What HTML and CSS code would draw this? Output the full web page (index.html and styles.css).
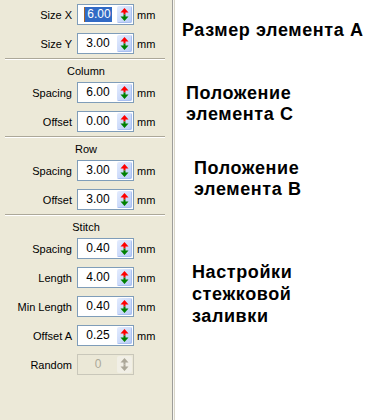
FILE: index.html
```html
<!DOCTYPE html>
<html lang="ru">

<head>
    <meta charset="utf-8">
    <meta name="viewport" content="width=device-width, initial-scale=1.0">
    <title>Fill settings</title>
    <link rel="stylesheet" href="styles.css">
</head>

<body>
    <div class="page">
        <div class="panel">
            <div class="group">
                <div class="row">
                    <label>Size X</label>
                    <div class="field"><span class="val"><span class="sel">6.00</span></span><span class="spin"><svg width="9" height="13" viewBox="0 0 9 13"><path d="M4.5 0 L8.5 4.5 H5.5 V6.5 H3.5 V4.5 H0.5 Z" fill="#f00"/><path d="M3.5 6.5 H5.5 V8.5 H8.5 L4.5 13 L0.5 8.5 H3.5 Z" fill="#008000"/></svg></span></div>
                    <span class="unit">mm</span>
                </div>
                <div class="row">
                    <label>Size Y</label>
                    <div class="field"><span class="val">3.00</span><span class="spin"><svg width="9" height="13" viewBox="0 0 9 13"><path d="M4.5 0 L8.5 4.5 H5.5 V6.5 H3.5 V4.5 H0.5 Z" fill="#f00"/><path d="M3.5 6.5 H5.5 V8.5 H8.5 L4.5 13 L0.5 8.5 H3.5 Z" fill="#008000"/></svg></span></div>
                    <span class="unit">mm</span>
                </div>
            </div>

            <div class="sep"></div>
            <div class="head">Column</div>
            <div class="group">
                <div class="row">
                    <label>Spacing</label>
                    <div class="field"><span class="val">6.00</span><span class="spin"><svg width="9" height="13" viewBox="0 0 9 13"><path d="M4.5 0 L8.5 4.5 H5.5 V6.5 H3.5 V4.5 H0.5 Z" fill="#f00"/><path d="M3.5 6.5 H5.5 V8.5 H8.5 L4.5 13 L0.5 8.5 H3.5 Z" fill="#008000"/></svg></span></div>
                    <span class="unit">mm</span>
                </div>
                <div class="row">
                    <label>Offset</label>
                    <div class="field"><span class="val">0.00</span><span class="spin"><svg width="9" height="13" viewBox="0 0 9 13"><path d="M4.5 0 L8.5 4.5 H5.5 V6.5 H3.5 V4.5 H0.5 Z" fill="#f00"/><path d="M3.5 6.5 H5.5 V8.5 H8.5 L4.5 13 L0.5 8.5 H3.5 Z" fill="#008000"/></svg></span></div>
                    <span class="unit">mm</span>
                </div>
            </div>

            <div class="sep"></div>
            <div class="head">Row</div>
            <div class="group">
                <div class="row">
                    <label>Spacing</label>
                    <div class="field"><span class="val">3.00</span><span class="spin"><svg width="9" height="13" viewBox="0 0 9 13"><path d="M4.5 0 L8.5 4.5 H5.5 V6.5 H3.5 V4.5 H0.5 Z" fill="#f00"/><path d="M3.5 6.5 H5.5 V8.5 H8.5 L4.5 13 L0.5 8.5 H3.5 Z" fill="#008000"/></svg></span></div>
                    <span class="unit">mm</span>
                </div>
                <div class="row">
                    <label>Offset</label>
                    <div class="field"><span class="val">3.00</span><span class="spin"><svg width="9" height="13" viewBox="0 0 9 13"><path d="M4.5 0 L8.5 4.5 H5.5 V6.5 H3.5 V4.5 H0.5 Z" fill="#f00"/><path d="M3.5 6.5 H5.5 V8.5 H8.5 L4.5 13 L0.5 8.5 H3.5 Z" fill="#008000"/></svg></span></div>
                    <span class="unit">mm</span>
                </div>
            </div>

            <div class="sep"></div>
            <div class="head">Stitch</div>
            <div class="group">
                <div class="row">
                    <label>Spacing</label>
                    <div class="field"><span class="val">0.40</span><span class="spin"><svg width="9" height="13" viewBox="0 0 9 13"><path d="M4.5 0 L8.5 4.5 H5.5 V6.5 H3.5 V4.5 H0.5 Z" fill="#f00"/><path d="M3.5 6.5 H5.5 V8.5 H8.5 L4.5 13 L0.5 8.5 H3.5 Z" fill="#008000"/></svg></span></div>
                    <span class="unit">mm</span>
                </div>
                <div class="row">
                    <label>Length</label>
                    <div class="field"><span class="val">4.00</span><span class="spin"><svg width="9" height="13" viewBox="0 0 9 13"><path d="M4.5 0 L8.5 4.5 H5.5 V6.5 H3.5 V4.5 H0.5 Z" fill="#f00"/><path d="M3.5 6.5 H5.5 V8.5 H8.5 L4.5 13 L0.5 8.5 H3.5 Z" fill="#008000"/></svg></span></div>
                    <span class="unit">mm</span>
                </div>
                <div class="row">
                    <label>Min Length</label>
                    <div class="field"><span class="val">0.40</span><span class="spin"><svg width="9" height="13" viewBox="0 0 9 13"><path d="M4.5 0 L8.5 4.5 H5.5 V6.5 H3.5 V4.5 H0.5 Z" fill="#f00"/><path d="M3.5 6.5 H5.5 V8.5 H8.5 L4.5 13 L0.5 8.5 H3.5 Z" fill="#008000"/></svg></span></div>
                    <span class="unit">mm</span>
                </div>
                <div class="row">
                    <label>Offset A</label>
                    <div class="field"><span class="val">0.25</span><span class="spin"><svg width="9" height="13" viewBox="0 0 9 13"><path d="M4.5 0 L8.5 4.5 H5.5 V6.5 H3.5 V4.5 H0.5 Z" fill="#f00"/><path d="M3.5 6.5 H5.5 V8.5 H8.5 L4.5 13 L0.5 8.5 H3.5 Z" fill="#008000"/></svg></span></div>
                    <span class="unit">mm</span>
                </div>
                <div class="row">
                    <label>Random</label>
                    <div class="field off"><span class="val">0</span><span class="spin"><svg width="9" height="13" viewBox="0 0 9 13"><path d="M4.5 0 L8.5 4.5 H5.5 V6.5 H3.5 V4.5 H0.5 Z" fill="#aca899"/><path d="M3.5 6.5 H5.5 V8.5 H8.5 L4.5 13 L0.5 8.5 H3.5 Z" fill="#aca899"/></svg></span></div>
                </div>
            </div>
        </div>

        <div class="notes">
            <p class="note n1">Размер элемента А</p>
            <p class="note n2">Положение<br>элемента С</p>
            <p class="note n3">Положение<br>элемента В</p>
            <p class="note n4">Настройки<br>стежковой<br>заливки</p>
        </div>
    </div>
</body>

</html>
```

FILE: styles.css
```css
body {
    margin: 0;
    padding: 0;
    background: white;
    font-family: "Liberation Sans", Arial, sans-serif;
}

.page {
    display: flex;
    height: 420px;
}

/* left dialog panel */

.panel {
    width: 172px;
    padding-top: 4px;
    background-color: #ece9d8;
    border-right: 1px solid #9d9d9a;
    font-size: 11px;
    color: #000000;
}

.group {
    display: flex;
    flex-direction: column;
    gap: 8px;
    margin-bottom: 4px;
}

.row {
    display: flex;
    align-items: center;
    height: 21px;
}

.row label {
    width: 72px;
    text-align: right;
}

.field {
    display: flex;
    box-sizing: border-box;
    width: 57px;
    height: 21px;
    margin-left: 5px;
    padding: 1px;
    border: 1px solid #7f9db9;
    background: white;
}

.val {
    flex: 1;
    text-align: center;
    line-height: 17px;
    font-size: 12px;
}

.sel {
    display: inline-block;
    padding: 0 1px 0 2px;
    border-left: 1px solid #a0642c;
    background: #316ac5;
    color: white;
    line-height: 15px;
    margin-top: 1px;
}

.spin {
    display: flex;
    align-items: center;
    justify-content: center;
    width: 15px;
    border-radius: 2px;
    background: linear-gradient(135deg, #e4ecfe, #b7cbf6);
    box-shadow: inset -1px -1px #a9bff0;
}

.unit {
    margin-left: 3px;
}

.field.off {
    border-color: #c9c7ba;
    background: #ebe8d7;
}

.field.off .val {
    color: #aca899;
}

.field.off .spin {
    background: #f1efe6;
    box-shadow: none;
}

.sep {
    margin: 0 7px 0 5px;
    border-top: 1px solid #aca899;
    border-bottom: 1px solid white;
}

.head {
    height: 22px;
    line-height: 22px;
    text-align: center;
}

/* annotations */

.notes {
    flex: 1;
    padding-top: 20px;
    border-left: 1px solid #f7f6f1;
    box-shadow: inset 1px 0 #d8d5c8;
}

.note {
    margin: 0;
    font-size: 18px;
    font-weight: bold;
    letter-spacing: 0.6px;
    line-height: 21px;
}

.n1 {
    margin-left: 8px;
}

.n2 {
    margin: 42px 0 0 12px;
}

.n3 {
    margin: 33px 0 0 20px;
}

.n4 {
    margin: 61px 0 0 18px;
    line-height: 22px;
}
```
